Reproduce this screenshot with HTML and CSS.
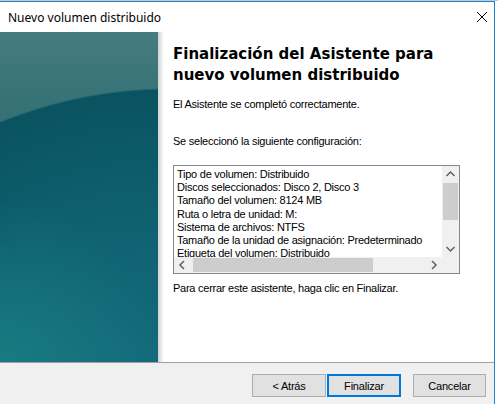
FILE: index.html
```
<!DOCTYPE html>
<html lang="es">
<head>
<meta charset="utf-8">
<link rel="stylesheet" href="styles.css">
</head>
<body>
<div class="topstrip"></div>
<div class="window">
  <div class="titlebar">
    <span class="title">Nuevo volumen distribuido</span>
    <svg class="close" width="12" height="12" viewBox="0 0 12 12"><path d="M1 1L11 11M11 1L1 11" stroke="#000" stroke-width="1" fill="none"/></svg>
  </div>
  <div class="main">
    <div class="banner"></div>
    <div class="shadow"></div>
    <div class="content">
      <h1 class="heading">Finalización del Asistente para nuevo volumen distribuido</h1>
      <p class="text first">El Asistente se completó correctamente.</p>
      <p class="text second">Se seleccionó la siguiente configuración:</p>
      <div class="listbox">
        <div class="listrow">
          <div class="lines">
            <div>Tipo de volumen: Distribuido</div>
            <div>Discos seleccionados: Disco 2, Disco 3</div>
            <div>Tamaño del volumen: 8124 MB</div>
            <div>Ruta o letra de unidad: M:</div>
            <div>Sistema de archivos: NTFS</div>
            <div>Tamaño de la unidad de asignación: Predeterminado</div>
            <div>Etiqueta del volumen: Distribuido</div>
          </div>
          <div class="vscroll">
            <svg class="arrow" width="17" height="17" viewBox="0 0 17 17"><path d="M4.5 10L8.5 6L12.5 10" stroke="#606060" stroke-width="1.5" fill="none"/></svg>
            <div class="vtrack"><div class="vthumb"></div></div>
            <svg class="arrow" width="17" height="17" viewBox="0 0 17 17"><path d="M4.5 7L8.5 11L12.5 7" stroke="#606060" stroke-width="1.5" fill="none"/></svg>
          </div>
        </div>
        <div class="hrow">
          <div class="hscroll">
            <svg class="arrow" width="17" height="16" viewBox="0 0 17 16"><path d="M10 4L6 8L10 12" stroke="#606060" stroke-width="1.5" fill="none"/></svg>
            <div class="htrack"><div class="hthumb"></div></div>
            <svg class="arrow" width="17" height="16" viewBox="0 0 17 16"><path d="M7 4L11 8L7 12" stroke="#606060" stroke-width="1.5" fill="none"/></svg>
          </div>
          <div class="corner"></div>
        </div>
      </div>
      <p class="text third">Para cerrar este asistente, haga clic en Finalizar.</p>
    </div>
  </div>
  <div class="footer">
    <button class="btn">&lt; Atrás</button>
    <button class="btn default">Finalizar</button>
    <button class="btn cancel">Cancelar</button>
  </div>
</div>
</body>
</html>
```
FILE: styles.css
```
html, body {
  margin: 0;
  padding: 0;
  background: #ffffff;
  width: 498px;
  height: 405px;
  overflow: hidden;
}
.topstrip {
  height: 1px;
  background: #c8c8c8;
}
.window {
  width: 494px;
  border-top: 1px solid #1883d7;
  border-right: 1px solid #1883d7;
  background: #ffffff;
  font-family: "Liberation Sans", Arial, sans-serif;
  font-size: 11px;
  letter-spacing: -0.25px;
  color: #000;
}
.titlebar {
  height: 30px;
  display: flex;
  align-items: center;
  justify-content: space-between;
  padding: 0 6px 0 8px;
  letter-spacing: 0;
}
.title {
  font-family: "Noto Sans", "Open Sans", sans-serif;
  font-size: 12px;
  color: #000;
}
.close {
  margin-right: 0;
}
.main {
  display: flex;
  height: 330px;
}
.banner {
  width: 158px;
  flex: none;
  background:
    radial-gradient(circle 160px at 0px 330px, rgba(30,140,140,0.55) 0, rgba(30,140,140,0) 160px),
    radial-gradient(circle 450px at 170px 506px, #16717f 0, #136a7a 190px, #0f6170 320px, #0a5361 448px, rgba(10,83,97,0) 450px),
    linear-gradient(180deg, #467c7f 0, #387377 60px, #306d74 120px);
}
.shadow {
  width: 6px;
  flex: none;
  background: linear-gradient(90deg, #d2d2d2, #ffffff);
}
.content {
  flex: 1;
  padding: 12px 0 0 9px;
}
.heading {
  margin: 0;
  font-family: "DejaVu Sans", Verdana, sans-serif;
  font-weight: bold;
  font-size: 15px;
  line-height: 21px;
  letter-spacing: 0;
  width: 290px;
}
.text {
  margin: 0;
  line-height: 13px;
}
.first {
  margin-top: 12px;
}
.second {
  margin-top: 24px;
}
.listbox {
  margin-top: 17px;
  width: 285px;
  border: 1px solid #828790;
  background: #fff;
}
.listrow {
  display: flex;
  height: 91px;
  overflow: hidden;
}
.lines {
  flex: 1;
  padding: 2px 0 0 3px;
  line-height: 13.2px;
  white-space: nowrap;
  overflow: hidden;
}
.vscroll {
  width: 17px;
  flex: none;
  background: #f0f0f0;
  display: flex;
  flex-direction: column;
}
.arrow {
  flex: none;
  display: block;
}
.vtrack {
  flex: 1;
}
.vthumb {
  height: 37px;
  margin-left: 1px;
  width: 15px;
  background: #cdcdcd;
}
.hrow {
  display: flex;
  height: 16px;
}
.hscroll {
  flex: 1;
  display: flex;
  background: #f0f0f0;
}
.htrack {
  flex: 1;
  padding-top: 1px;
}
.hthumb {
  width: 180px;
  height: 14px;
  background: #cdcdcd;
  margin-left: 2px;
}
.corner {
  width: 17px;
  background: #f0f0f0;
}
.third {
  margin-top: 8px;
}
.footer {
  height: 42px;
  border-top: 1px solid #a0a0a0;
  background: #f0f0f0;
  display: flex;
  justify-content: flex-end;
  align-items: flex-start;
  padding: 11px 8px 0 0;
  box-sizing: border-box;
}
.btn {
  width: 74px;
  height: 23px;
  border: 1px solid #adadad;
  background: #e1e1e1;
  font-family: "Liberation Sans", Arial, sans-serif;
  font-size: 11px;
  letter-spacing: -0.2px;
  color: #000;
  padding: 0;
  margin: 0;
}
.default {
  border: 2px solid #0078d7;
  margin-left: 1px;
}
.cancel {
  margin-left: 12px;
  width: 73px;
}
```
